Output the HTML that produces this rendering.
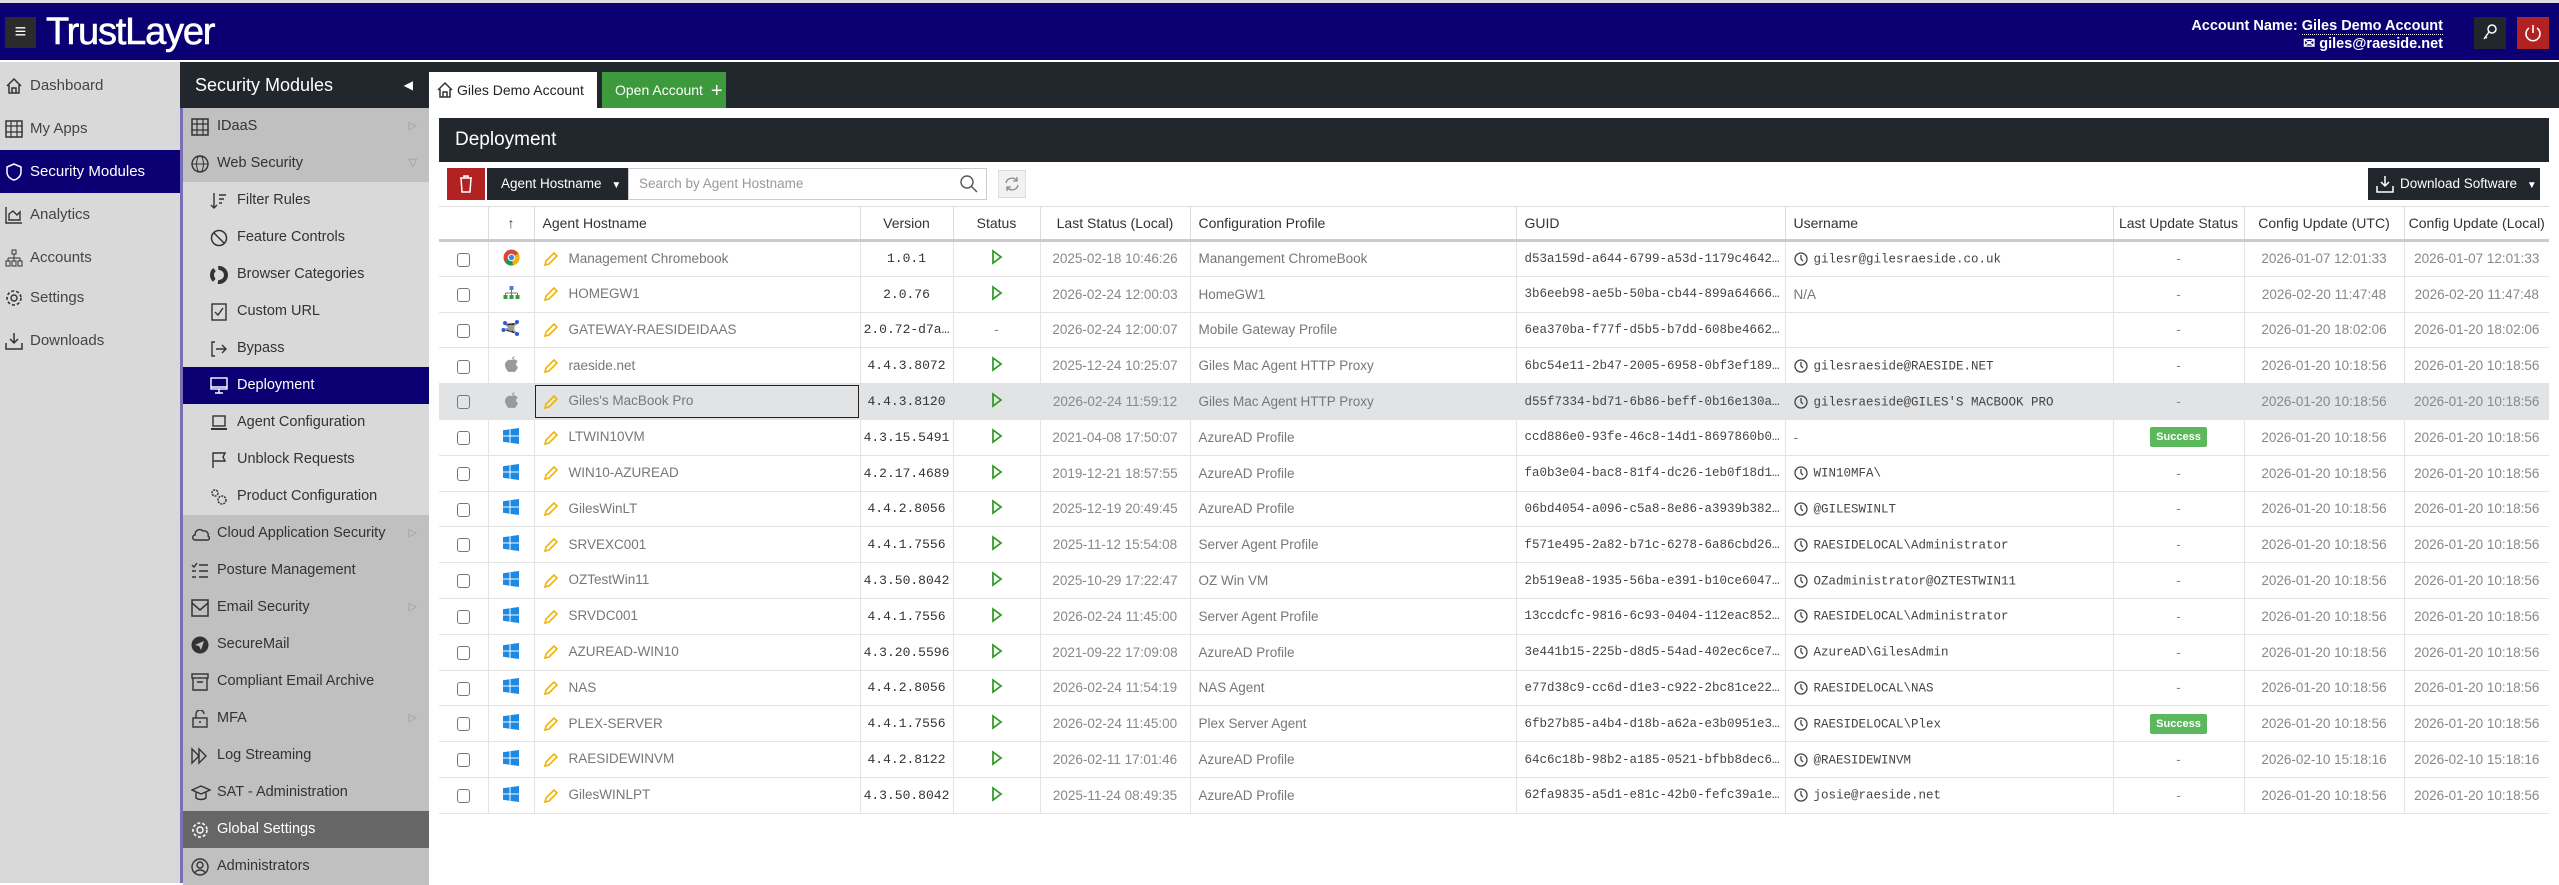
<!DOCTYPE html>
<html><head><meta charset="utf-8"><style>
*{box-sizing:border-box;margin:0;padding:0}
body{width:2559px;height:883px;overflow:hidden;background:#fff;font-family:"Liberation Sans",sans-serif;position:relative}
.top{position:absolute;left:0;top:0;width:2559px;height:62px;background:#0b0073;border-top:3px solid #ddd;border-bottom:2px solid #fff}
.ham{position:absolute;left:5px;top:14px;width:31px;height:31px;background:#2b2b2b;color:#fff;font-size:20px;text-align:center;line-height:30px}
.logo{position:absolute;left:46px;top:8px;color:#fff;font-size:38px;letter-spacing:-1.2px;font-weight:normal;-webkit-text-stroke:0.6px #fff}
.acct{position:absolute;right:116px;top:14px;color:#fff;font-weight:bold;font-size:14.5px;text-align:right;line-height:18px}
.acct u{text-decoration:none;border-bottom:1px dotted #fff}
.kbtn{position:absolute;left:2474px;top:17px;width:32px;height:32px;background:#22272e}
.pbtn{position:absolute;left:2517px;top:17px;width:32px;height:32px;background:#b22222}
.side{position:absolute;left:0;top:62px;width:180px;height:821px;background:#d9d9d9}
.side div{position:absolute;left:0;width:180px;height:43px;color:#444;font-size:15px;line-height:43px;padding-left:30px}
.side svg{position:absolute;left:5px;top:13px}
.side .sel{background:#0b0073;color:#fff}
.p2{position:absolute;left:180px;top:62px;width:249px;height:821px;background:#d9d9d9;border-left:3px solid #7a6fb5}
.p2h{position:absolute;left:180px;top:62px;width:249px;height:46px;background:#22272e;color:#fff;font-size:18px;line-height:46px;padding-left:15px}
.it{position:absolute;left:183px;width:246px;height:37px;font-size:14.5px;line-height:37px;color:#333}
.it.t{background:#c0c0c0;padding-left:34px}
.it.s{padding-left:54px}
.it.sel{background:#0b0073;color:#fff}
.it.gs{background:#666;color:#fff}
.it svg{position:absolute;top:10px}
.it.t svg{left:8px}.it.s svg{left:27px}
.arr{position:absolute;right:12px;top:0;color:#999;font-size:11px}
.tabbar{position:absolute;left:429px;top:62px;width:2130px;height:46px;background:#22272e}
.tab1{position:absolute;left:429px;top:72px;width:168px;height:36px;background:#fff;font-size:14px;line-height:36px;padding-left:28px;color:#222}
.tab2{position:absolute;left:602px;top:72px;width:124px;height:36px;background:#3c9a3c;color:#fff;font-size:14px;line-height:36px;padding-left:13px}
.dh{position:absolute;left:439px;top:118px;width:2110px;height:44px;background:#22272e;color:#fff;font-size:19px;line-height:44px;padding-left:16px}
.del{position:absolute;left:447px;top:168px;width:38px;height:32px;background:#b22222}
.dd{position:absolute;left:487px;top:168px;width:141px;height:32px;background:#22272e;color:#fff;font-size:13.5px;line-height:32px;padding-left:14px}
.srch{position:absolute;left:628px;top:168px;width:359px;height:32px;border:1px solid #ccc;color:#999;font-size:13.5px;line-height:30px;padding-left:10px}
.ref{position:absolute;left:998px;top:170px;width:28px;height:28px;background:#f2f2f2;border:1px solid #ddd}
.dl{position:absolute;left:2368px;top:168px;width:172px;height:32px;background:#22272e;color:#fff;font-size:13.5px;line-height:32px;padding-left:32px}
table{position:absolute;left:439px;top:206px;width:2110px;border-collapse:collapse;table-layout:fixed}
th{height:34px;font-weight:normal;font-size:14px;color:#333;text-align:left;padding-left:8px;border-top:1px solid #ddd;border-left:1px solid #ddd;border-bottom:3px solid #ccc;white-space:nowrap;overflow:hidden}
td{height:35.8px;border-bottom:1px solid #e4e4e4;border-left:1px solid #e4e4e4;font-size:13.5px;color:#777;padding-left:8px;white-space:nowrap;overflow:hidden;text-overflow:ellipsis}
th:first-child,td:first-child{border-left:none}
.c{text-align:center;padding-left:0}
.m{font-family:"Liberation Mono",monospace;font-size:12.5px;color:#444}
.v{font-family:"Liberation Mono",monospace;font-size:13px;color:#333;text-align:center;padding-left:0}
.d{color:#888;font-size:13.5px}
tr.hl td{background:#e2e3e5}
.cb{display:inline-block;width:13px;height:14px;border:1.5px solid #777;border-radius:3px;vertical-align:middle}
.ok{display:inline-block;background:#5cb85c;color:#fff;font-size:11px;font-weight:bold;padding:4px 6px;border-radius:2px}
.u svg{vertical-align:middle;margin-right:6px}
</style></head><body>
<div class="top"><div class="ham">&#8801;</div><div class="logo">TrustLayer</div>
<div class="acct">Account Name: <u>Giles Demo Account</u><br>&#9993; giles@raeside.net</div>
</div>
<div class="kbtn"><svg width="32" height="32"><circle cx="18" cy="12" r="4" fill="none" stroke="#fff" stroke-width="1.5"/><path d="M15 15 L10 22 M11 20 L13 21" stroke="#fff" stroke-width="1.5" fill="none"/></svg></div>
<div class="pbtn"><svg width="32" height="32"><path d="M12 11 A7 7 0 1 0 20 11" stroke="#fff" stroke-width="1.6" fill="none"/><path d="M16 8 V16" stroke="#fff" stroke-width="1.6"/></svg></div>

<div class="side">
<div style="top:2px"><svg width="18" height="18"><path d="M2 9 L9 2 L16 9 M4 8 V16 H14 V8 M7 16 V11 H11 V16" stroke="#333" fill="none" stroke-width="1.5"/></svg>Dashboard</div>
<div style="top:45px"><svg width="18" height="18"><rect x="1" y="1" width="16" height="16" stroke="#333" fill="none" stroke-width="1.5"/><path d="M6 1V17M12 1V17M1 6H17M1 12H17" stroke="#333" stroke-width="1.2"/></svg>My Apps</div>
<div class="sel" style="top:88px"><svg width="18" height="18"><path d="M9 1 L16 4 V9 C16 13 13 16 9 17 C5 16 2 13 2 9 V4 Z" stroke="#fff" fill="none" stroke-width="1.5"/></svg>Security Modules</div>
<div style="top:131px"><svg width="18" height="18"><path d="M1 1V17H17M4 14V8L8 5L12 9L15 6V14Z" stroke="#333" fill="none" stroke-width="1.4"/></svg>Analytics</div>
<div style="top:174px"><svg width="18" height="18"><rect x="7" y="1" width="4" height="4" stroke="#333" fill="none"/><path d="M9 5V9M3 9H15M3 9V12M9 9V12M15 9V12" stroke="#333" fill="none"/><rect x="1" y="12" width="4" height="5" stroke="#333" fill="none"/><rect x="7" y="12" width="4" height="5" stroke="#333" fill="none"/><rect x="13" y="12" width="4" height="5" stroke="#333" fill="none"/></svg>Accounts</div>
<div style="top:214px"><svg width="18" height="18"><circle cx="9" cy="9" r="3" stroke="#333" fill="none" stroke-width="1.4"/><circle cx="9" cy="9" r="7" stroke="#333" fill="none" stroke-width="1.6" stroke-dasharray="3 2"/></svg>Settings</div>
<div style="top:257px"><svg width="18" height="18"><path d="M9 1V11M5 7L9 11L13 7M1 11V17H17V11" stroke="#333" fill="none" stroke-width="1.5"/></svg>Downloads</div>
</div>

<div class="p2"></div>
<div class="p2h">Security Modules<span style="position:absolute;right:16px;font-size:12px">&#9664;</span></div>
<div class="it t" style="top:108px"><svg width="18" height="18"><rect x="1" y="1" width="16" height="16" stroke="#333" fill="none" stroke-width="1.5"/><path d="M6 1V17M12 1V17M1 6H17M1 12H17" stroke="#333" stroke-width="1.2"/></svg>IDaaS<span class="arr">&#9655;</span></div>
<div class="it t" style="top:145px"><svg width="18" height="18"><circle cx="9" cy="9" r="8" stroke="#333" fill="none" stroke-width="1.4"/><ellipse cx="9" cy="9" rx="3.5" ry="8" stroke="#333" fill="none"/><path d="M1 9H17" stroke="#333"/></svg>Web Security<span class="arr">&#9661;</span></div>
<div class="it s" style="top:182px"><svg width="18" height="18"><path d="M4 1V16M1 13L4 16L7 13M9 3H16M9 7H14M9 11H12" stroke="#333" fill="none" stroke-width="1.4"/></svg>Filter Rules</div>
<div class="it s" style="top:219px"><svg width="18" height="18"><circle cx="9" cy="9" r="7.5" stroke="#333" fill="none" stroke-width="1.5"/><path d="M4 4L14 14" stroke="#333" stroke-width="1.5"/></svg>Feature Controls</div>
<div class="it s" style="top:256px"><svg width="18" height="18"><circle cx="9" cy="9" r="7" stroke="#333" fill="none" stroke-width="4" stroke-dasharray="12 4"/></svg>Browser Categories</div>
<div class="it s" style="top:293px"><svg width="18" height="18"><rect x="2" y="1" width="14" height="16" stroke="#333" fill="none" stroke-width="1.4"/><path d="M5 9L8 12L13 5" stroke="#333" fill="none" stroke-width="1.4"/></svg>Custom URL</div>
<div class="it s" style="top:330px"><svg width="18" height="18"><path d="M5 2H2V16H5M6 9H16M12 5L16 9L12 13" stroke="#333" fill="none" stroke-width="1.4"/></svg>Bypass</div>
<div class="it s sel" style="top:367px"><svg width="18" height="18"><rect x="1" y="1" width="16" height="11" stroke="#fff" fill="none" stroke-width="1.4"/><path d="M1 10H17M9 12V16M5 16H13" stroke="#fff" stroke-width="1.4"/></svg>Deployment</div>
<div class="it s" style="top:404px"><svg width="18" height="18"><rect x="3" y="2" width="12" height="10" stroke="#333" fill="none" stroke-width="1.4"/><path d="M1 15H17" stroke="#333" stroke-width="2"/></svg>Agent Configuration</div>
<div class="it s" style="top:441px"><svg width="18" height="18"><path d="M3 17V2H15L13 6L15 10H3" stroke="#333" fill="none" stroke-width="1.4"/></svg>Unblock Requests</div>
<div class="it s" style="top:478px"><svg width="18" height="18"><circle cx="5" cy="5" r="3" stroke="#333" fill="none" stroke-width="1.5" stroke-dasharray="2 1"/><circle cx="12" cy="12" r="4" stroke="#333" fill="none" stroke-width="1.5" stroke-dasharray="2 1"/></svg>Product Configuration</div>
<div class="it t" style="top:515px"><svg width="20" height="18"><path d="M4 15C1 15 1 10 4 10C4 5 9 3 12 6C15 5 18 8 17 11C19 12 19 15 16 15Z" stroke="#333" fill="none" stroke-width="1.4"/></svg>Cloud Application Security<span class="arr">&#9655;</span></div>
<div class="it t" style="top:552px"><svg width="18" height="18"><path d="M1 3L3 5L6 1M8 3H17M8 9H17M8 15H17M1 9H5M1 15H5" stroke="#333" fill="none" stroke-width="1.4"/></svg>Posture Management</div>
<div class="it t" style="top:589px"><svg width="18" height="18"><rect x="1" y="1" width="16" height="16" stroke="#333" fill="none" stroke-width="1.5"/><path d="M1 4L9 11L17 4" stroke="#333" fill="none" stroke-width="1.5"/></svg>Email Security<span class="arr">&#9655;</span></div>
<div class="it t" style="top:626px"><svg width="18" height="18"><circle cx="9" cy="9" r="8.5" fill="#333"/><path d="M4 9L13 5L10 14L8 10Z" fill="#c0c0c0"/></svg>SecureMail</div>
<div class="it t" style="top:663px"><svg width="18" height="18"><rect x="1" y="1" width="16" height="4" stroke="#333" fill="none" stroke-width="1.4"/><path d="M2 5V17H16V5M6 9H12" stroke="#333" fill="none" stroke-width="1.4"/></svg>Compliant Email Archive</div>
<div class="it t" style="top:700px"><svg width="18" height="18"><path d="M5 8V4A4 4 0 0 1 13 4" stroke="#333" fill="none" stroke-width="1.4"/><rect x="2" y="8" width="14" height="9" stroke="#333" fill="none" stroke-width="1.4"/><circle cx="9" cy="12" r="1" fill="#333"/></svg>MFA<span class="arr">&#9655;</span></div>
<div class="it t" style="top:737px"><svg width="18" height="18"><path d="M1 2V16L8 9ZM8 2V16L15 9Z" stroke="#333" fill="none" stroke-width="1.4"/></svg>Log Streaming</div>
<div class="it t" style="top:774px"><svg width="20" height="18"><path d="M1 6L10 2L19 6L10 10Z M5 8V14C8 16 12 16 15 14V8" stroke="#333" fill="none" stroke-width="1.4"/></svg>SAT - Administration</div>
<div class="it t gs" style="top:811px"><svg width="18" height="18"><circle cx="9" cy="9" r="3" stroke="#fff" fill="none" stroke-width="1.4"/><circle cx="9" cy="9" r="7" stroke="#fff" fill="none" stroke-width="1.6" stroke-dasharray="3 2"/></svg>Global Settings</div>
<div class="it t" style="top:848px"><svg width="18" height="18"><circle cx="9" cy="9" r="8" stroke="#333" fill="none" stroke-width="1.4"/><circle cx="9" cy="7" r="3" stroke="#333" fill="none" stroke-width="1.4"/><path d="M4 15C5 11 13 11 14 15" stroke="#333" fill="none" stroke-width="1.4"/></svg>Administrators</div>

<div class="tabbar"></div>
<div class="tab1"><svg width="18" height="18" style="position:absolute;left:7px;top:9px"><path d="M2 9 L9 2 L16 9 M4 8 V16 H14 V8 M7 16 V11 H11 V16" stroke="#333" fill="none" stroke-width="1.5"/></svg>Giles Demo Account</div>
<div class="tab2">Open Account <span style="font-size:20px;vertical-align:-2px;margin-left:4px">+</span></div>
<div class="dh">Deployment</div>
<div class="del"><svg width="38" height="32"><path d="M13 10H25M17 10V8H21V10M14 10L15 24H23L24 10" stroke="#fff" fill="none" stroke-width="1.5"/></svg></div>
<div class="dd">Agent Hostname <span style="font-size:10px;margin-left:6px">&#9660;</span></div>
<div class="srch">Search by Agent Hostname<svg width="18" height="18" style="position:absolute;right:8px;top:6px"><circle cx="7" cy="7" r="6" stroke="#555" fill="none" stroke-width="1.4"/><path d="M11 11L17 17" stroke="#555" stroke-width="1.4"/></svg></div>
<div class="ref"><svg width="26" height="26"><path d="M7 12A6 6 0 0 1 18 10M19 14A6 6 0 0 1 8 16M18 6V10H14M8 20V16H12" stroke="#888" fill="none" stroke-width="1.3"/></svg></div>
<div class="dl"><svg width="18" height="18" style="position:absolute;left:8px;top:7px"><path d="M9 1V11M5 7L9 11L13 7M1 11V17H17V11" stroke="#fff" fill="none" stroke-width="1.5"/></svg>Download Software <span style="font-size:10px;margin-left:6px">&#9660;</span></div>

<table>
<colgroup><col style="width:49px"><col style="width:46px"><col style="width:326px"><col style="width:93px"><col style="width:87px"><col style="width:150px"><col style="width:326px"><col style="width:269px"><col style="width:328px"><col style="width:131px"><col style="width:160px"><col style="width:145px"></colgroup>
<tr><th></th><th class="c">&#8593;</th><th>Agent Hostname</th><th class="c">Version</th><th class="c">Status</th><th class="c">Last Status (Local)</th><th>Configuration Profile</th><th>GUID</th><th>Username</th><th class="c">Last Update Status</th><th class="c">Config Update (UTC)</th><th class="c">Config Update (Local)</th></tr>
<tr><td class="c"><span class="cb"></span></td><td class="c"><svg width="17" height="17"><circle cx="8.5" cy="8.5" r="8" fill="#db4437"/><path d="M8.5 8.5L1.6 12.5A8 8 0 0 0 10 16.4Z" fill="#0f9d58"/><path d="M8.5 8.5L10 16.4A8 8 0 0 0 15.4 4.5Z" fill="#f4b400"/><circle cx="8.5" cy="8.5" r="3.8" fill="#fff"/><circle cx="8.5" cy="8.5" r="2.8" fill="#4285f4"/></svg></td><td><svg width="16" height="16" style="vertical-align:middle;margin-right:10px"><path d="M2 14L3 10L11 2L14 5L6 13Z" fill="none" stroke="#f0b400" stroke-width="1.6"/></svg>Management Chromebook</td><td class="v">1.0.1</td><td class="c"><svg width="12" height="16"><path d="M2 2L10 8L2 14Z" fill="none" stroke="#2a9a1f" stroke-width="1.7"/></svg></td><td class="c d">2025-02-18 10:46:26</td><td>Manangement ChromeBook</td><td class="m">d53a159d-a644-6799-a53d-1179c4642c…</td><td class="m u"><svg width="14" height="16"><circle cx="7" cy="8" r="6" fill="none" stroke="#444" stroke-width="1.3"/><path d="M7 4V8L9 10" stroke="#444" fill="none" stroke-width="1.3"/></svg>gilesr@gilesraeside.co.uk</td><td class="c d">-</td><td class="c d">2026-01-07 12:01:33</td><td class="c d">2026-01-07 12:01:33</td></tr>
<tr><td class="c"><span class="cb"></span></td><td class="c"><svg width="17" height="14"><rect x="6.5" y="0" width="4" height="4" fill="#4a7fd6"/><path d="M8.5 4V7M2.5 7H14.5M2.5 7V9M8.5 7V9M14.5 7V9" stroke="#777" fill="none"/><rect x="0.5" y="9" width="4" height="4" fill="#3a9a3a"/><rect x="6.5" y="9" width="4" height="4" fill="#3a9a3a"/><rect x="12.5" y="9" width="4" height="4" fill="#3a9a3a"/></svg></td><td><svg width="16" height="16" style="vertical-align:middle;margin-right:10px"><path d="M2 14L3 10L11 2L14 5L6 13Z" fill="none" stroke="#f0b400" stroke-width="1.6"/></svg>HOMEGW1</td><td class="v">2.0.76</td><td class="c"><svg width="12" height="16"><path d="M2 2L10 8L2 14Z" fill="none" stroke="#2a9a1f" stroke-width="1.7"/></svg></td><td class="c d">2026-02-24 12:00:03</td><td>HomeGW1</td><td class="m">3b6eeb98-ae5b-50ba-cb44-899a646663…</td><td>N/A</td><td class="c d">-</td><td class="c d">2026-02-20 11:47:48</td><td class="c d">2026-02-20 11:47:48</td></tr>
<tr><td class="c"><span class="cb"></span></td><td class="c"><svg width="20" height="18"><path d="M4 5L10 9L16 4M3 11L10 9L16 15" stroke="#999" stroke-width="2"/><circle cx="10" cy="9" r="3.5" fill="#999"/><circle cx="4" cy="4" r="2" fill="#2a5bd7"/><circle cx="16" cy="3" r="2" fill="#2a5bd7"/><circle cx="2.5" cy="11" r="2" fill="#2a5bd7"/><circle cx="16" cy="15" r="2" fill="#2a5bd7"/></svg></td><td><svg width="16" height="16" style="vertical-align:middle;margin-right:10px"><path d="M2 14L3 10L11 2L14 5L6 13Z" fill="none" stroke="#f0b400" stroke-width="1.6"/></svg>GATEWAY-RAESIDEIDAAS</td><td class="v">2.0.72-d7a…</td><td class="c d">-</td><td class="c d">2026-02-24 12:00:07</td><td>Mobile Gateway Profile</td><td class="m">6ea370ba-f77f-d5b5-b7dd-608be46628…</td><td></td><td class="c d">-</td><td class="c d">2026-01-20 18:02:06</td><td class="c d">2026-01-20 18:02:06</td></tr>
</table>
<script>
var pen='<svg width="16" height="16" style="vertical-align:middle;margin-right:10px"><path d="M2 14L3 10L11 2L14 5L6 13Z" fill="none" stroke="#f0b400" stroke-width="1.6"/></svg>';
var play='<svg width="12" height="16"><path d="M2 2L10 8L2 14Z" fill="none" stroke="#2a9a1f" stroke-width="1.7"/></svg>';
var clk='<svg width="14" height="16"><circle cx="7" cy="8" r="6" fill="none" stroke="#444" stroke-width="1.3"/><path d="M7 4V8L9 10" stroke="#444" fill="none" stroke-width="1.3"/></svg>';
var apple='<svg width="15" height="17"><path d="M7.5 4C9 3 13 3 13.5 6C11.5 7 11.5 10 14 11C13 14 11 16.5 9.5 16C8.5 15.6 7 15.6 5.5 16C4 16.5 1 12 1 9C1 5 5 3 7.5 4Z M8 3C8 1.5 9 0.5 10.5 0.3C10.5 1.8 9.5 3 8 3Z" fill="#999"/></svg>';
var win='<svg width="16" height="16"><path d="M0 2.2L6.5 1.3V7.5H0ZM7.5 1.1L16 0V7.5H7.5ZM0 8.5H6.5V14.7L0 13.8ZM7.5 8.5H16V16L7.5 14.9Z" fill="#1e88e5"/></svg>';
var R=[
[apple,'raeside.net','4.4.3.8072',1,'2025-12-24 10:25:07','Giles Mac Agent HTTP Proxy','6bc54e11-2b47-2005-6958-0bf3ef1895…','gilesraeside@RAESIDE.NET',0,'2026-01-20 10:18:56'],
[apple,"Giles's MacBook Pro",'4.4.3.8120',1,'2026-02-24 11:59:12','Giles Mac Agent HTTP Proxy','d55f7334-bd71-6b86-beff-0b16e130af…',"gilesraeside@GILES'S MACBOOK PRO",0,'2026-01-20 10:18:56','hl'],
[win,'LTWIN10VM','4.3.15.5491',1,'2021-04-08 17:50:07','AzureAD Profile','ccd886e0-93fe-46c8-14d1-8697860b07…','-',1,'2026-01-20 10:18:56'],
[win,'WIN10-AZUREAD','4.2.17.4689',1,'2019-12-21 18:57:55','AzureAD Profile','fa0b3e04-bac8-81f4-dc26-1eb0f18d10…','WIN10MFA\\',0,'2026-01-20 10:18:56'],
[win,'GilesWinLT','4.4.2.8056',1,'2025-12-19 20:49:45','AzureAD Profile','06bd4054-a096-c5a8-8e86-a3939b382a…','@GILESWINLT',0,'2026-01-20 10:18:56'],
[win,'SRVEXC001','4.4.1.7556',1,'2025-11-12 15:54:08','Server Agent Profile','f571e495-2a82-b71c-6278-6a86cbd260…','RAESIDELOCAL\\Administrator',0,'2026-01-20 10:18:56'],
[win,'OZTestWin11','4.3.50.8042',1,'2025-10-29 17:22:47','OZ Win VM','2b519ea8-1935-56ba-e391-b10ce60476…','OZadministrator@OZTESTWIN11',0,'2026-01-20 10:18:56'],
[win,'SRVDC001','4.4.1.7556',1,'2026-02-24 11:45:00','Server Agent Profile','13ccdcfc-9816-6c93-0404-112eac852d…','RAESIDELOCAL\\Administrator',0,'2026-01-20 10:18:56'],
[win,'AZUREAD-WIN10','4.3.20.5596',1,'2021-09-22 17:09:08','AzureAD Profile','3e441b15-225b-d8d5-54ad-402ec6ce78…','AzureAD\\GilesAdmin',0,'2026-01-20 10:18:56'],
[win,'NAS','4.4.2.8056',1,'2026-02-24 11:54:19','NAS Agent','e77d38c9-cc6d-d1e3-c922-2bc81ce22a…','RAESIDELOCAL\\NAS',0,'2026-01-20 10:18:56'],
[win,'PLEX-SERVER','4.4.1.7556',1,'2026-02-24 11:45:00','Plex Server Agent','6fb27b85-a4b4-d18b-a62a-e3b0951e3c…','RAESIDELOCAL\\Plex',1,'2026-01-20 10:18:56'],
[win,'RAESIDEWINVM','4.4.2.8122',1,'2026-02-11 17:01:46','AzureAD Profile','64c6c18b-98b2-a185-0521-bfbb8dec6b…','@RAESIDEWINVM',0,'2026-02-10 15:18:16'],
[win,'GilesWINLPT','4.3.50.8042',1,'2025-11-24 08:49:35','AzureAD Profile','62fa9835-a5d1-e81c-42b0-fefc39a1e7…','josie@raeside.net',0,'2026-01-20 10:18:56']];
var h='';R.forEach(function(r){h+='<tr class="'+(r[10]||'')+'"><td class="c"><span class="cb"></span></td><td class="c">'+r[0]+'</td><td'+(r[10]?' style="outline:1.5px solid #222;outline-offset:-2px"':'')+'>'+pen+r[1]+'</td><td class="v">'+r[2]+'</td><td class="c">'+play+'</td><td class="c d">'+r[4]+'</td><td>'+r[5]+'</td><td class="m">'+r[6]+'</td>'+(r[7]=='-'?'<td>-</td>':'<td class="m u">'+clk+r[7]+'</td>')+'<td class="c d">'+(r[8]?'<span class="ok">Success</span>':'-')+'</td><td class="c d">'+r[9]+'</td><td class="c d">'+r[9]+'</td></tr>';});
document.querySelector('table tbody').insertAdjacentHTML('beforeend',h);
</script>
</body></html>
